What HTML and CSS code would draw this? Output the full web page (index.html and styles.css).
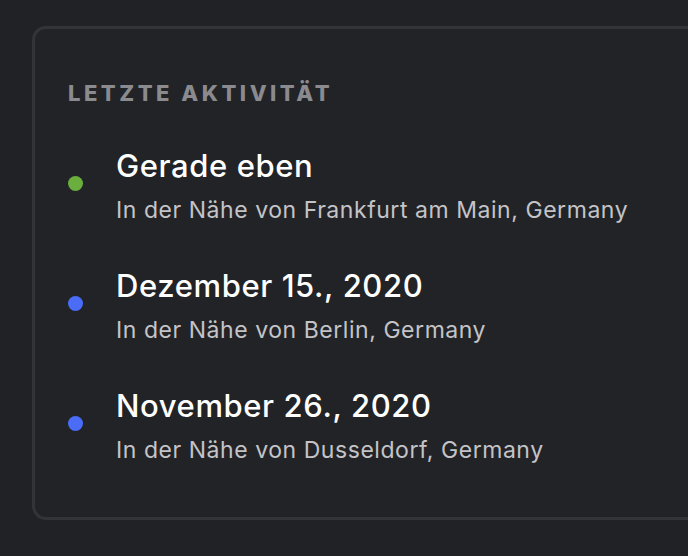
FILE: index.html
```html
<!DOCTYPE html>
<html lang="de">
<head>
<meta charset="utf-8">
<link rel="stylesheet" href="styles.css">
</head>
<body>
<section class="card">
  <h2 class="heading">Letzte Aktivität</h2>
  <ul class="list">
    <li class="item">
      <span class="dot dot-green"></span>
      <div class="text">
        <div class="title">Gerade eben</div>
        <div class="sub">In der Nähe von Frankfurt am Main, Germany</div>
      </div>
    </li>
    <li class="item">
      <span class="dot dot-blue"></span>
      <div class="text">
        <div class="title">Dezember 15., 2020</div>
        <div class="sub">In der Nähe von Berlin, Germany</div>
      </div>
    </li>
    <li class="item">
      <span class="dot dot-blue"></span>
      <div class="text">
        <div class="title">November 26., 2020</div>
        <div class="sub">In der Nähe von Dusseldorf, Germany</div>
      </div>
    </li>
  </ul>
</section>
</body>
</html>
```
FILE: styles.css
```css
html, body {
  margin: 0;
  padding: 0;
  background: #212226;
  overflow: hidden;
  height: 556px;
}
body {
  font-family: Inter, "Noto Sans", sans-serif;
  padding: 26px 0 0 32px;
  box-sizing: border-box;
}
.card {
  width: 700px;
  box-sizing: border-box;
  border: 3px solid #333438;
  border-radius: 14px;
  background: #222327;
  padding: 53px 0 53px 33px;
}
.heading {
  margin: 0;
  font-size: 22px;
  line-height: 22px;
  font-weight: 800;
  text-transform: uppercase;
  letter-spacing: 3.5px;
  color: #8b8b8f;
}
.list {
  list-style: none;
  margin: 44px 0 0;
  padding: 0;
  display: flex;
  flex-direction: column;
  gap: 44px;
}
.item {
  display: flex;
  align-items: center;
  gap: 33px;
}
.dot {
  width: 15px;
  height: 15px;
  border-radius: 50%;
  flex: none;
  margin-bottom: 6px;
}
.dot-green { background: #6aae3e; }
.dot-blue { background: #4a6cf7; }
.text {
  display: flex;
  flex-direction: column;
  gap: 12px;
}
.title {
  font-size: 31px;
  line-height: 36px;
  letter-spacing: 0.6px;
  color: #ffffff;
  font-weight: 500;
}
.sub {
  font-size: 23px;
  line-height: 28px;
  letter-spacing: 0.55px;
  color: #c4c4c8;
}
```
